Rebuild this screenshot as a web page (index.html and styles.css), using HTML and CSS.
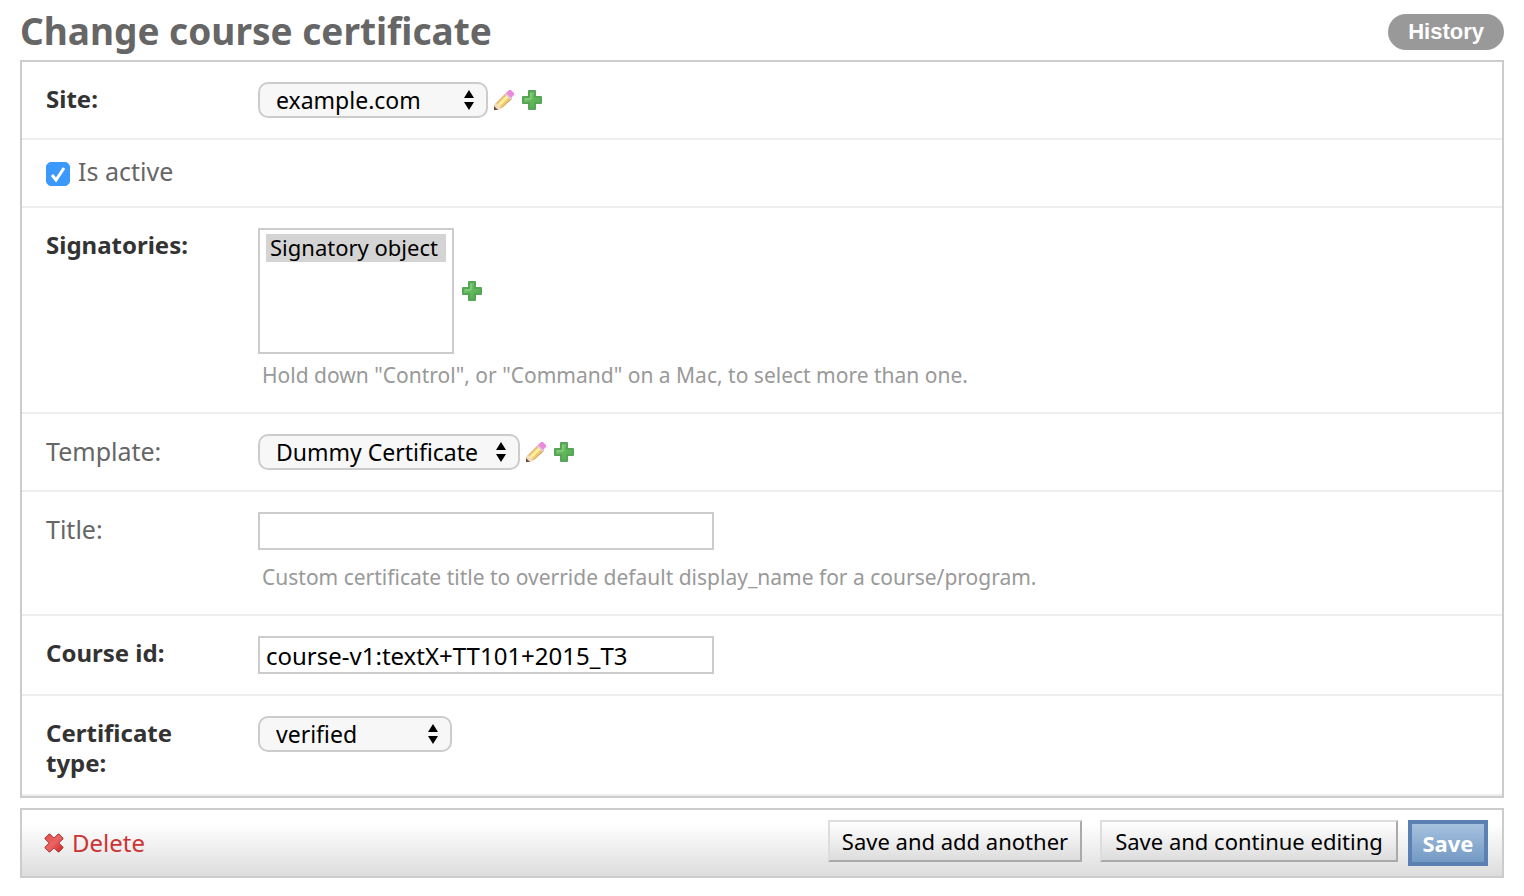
FILE: index.html
```html
<!DOCTYPE html>
<html lang="en">
<head>
<meta charset="utf-8">
<title>Change course certificate</title>
<link rel="stylesheet" href="styles.css">
</head>
<body>
<svg class="defs" aria-hidden="true">
  <defs>
    <linearGradient id="green" x1="0" y1="0" x2="1" y2="1"><stop offset="0" stop-color="#7ccb75"/><stop offset="1" stop-color="#4aa547"/></linearGradient>
    <linearGradient id="red" x1="0" y1="0" x2="1" y2="1"><stop offset="0" stop-color="#e54848"/><stop offset=".5" stop-color="#ea6464"/><stop offset="1" stop-color="#cc1f1f"/></linearGradient>
    <symbol id="plus" viewBox="0 0 20 20">
      <path d="M7 1h6v6h6v6h-6v6H7v-6H1V7h6z" fill="url(#green)" stroke="#56a556" stroke-width="2" stroke-linejoin="round"/>
      <path d="M9 3v6H3" fill="none" stroke="#8fd889" stroke-width="1"/>
    </symbol>
    <symbol id="pencil" viewBox="0 0 20 20">
      <path d="M0 15 12 3l5 5L6 19l-6 1z" fill="#f0ca68"/>
      <path d="M1 14 12 3l1 1L3 15z" fill="#e2c083"/>
      <path d="M6 19 17 8l1 1L8 18z" fill="#cf9a5a"/>
      <path d="M3 15 13 5l2 2L5 17z" fill="#fff09a"/>
      <path d="M0 20v-5l2-2 5 5-2 2z" fill="#f3dcc4"/>
      <path d="M0 20v-4l4 4z" fill="#6b4c34"/>
      <path d="m11 4 2-2 5 5-2 3z" fill="#e0cfe0"/>
      <path d="m12 3 3-3h2l3 3v2l-3 3z" fill="#ee8ade"/>
    </symbol>
    <symbol id="cross" viewBox="0 0 20 20">
      <path d="M5 1h1l4 4 4-4h1l4 4v1l-4 4 4 4v1l-4 4h-1l-4-4-4 4H5l-4-4v-1l4-4-4-4V5z" fill="url(#red)" stroke="#b34a4a" stroke-width="1" stroke-linejoin="round"/>
    </symbol>
    <symbol id="arrows" viewBox="0 0 10 20"><path d="M5 0l5 8H0zM5 20l5-8H0z"/></symbol>
  </defs>
</svg>
<main class="page">
  <header class="top">
    <h1 class="heading">Change course certificate</h1>
    <a class="history" href="#">History</a>
  </header>
  <form class="form">
    <div class="module">
      <div class="row">
        <label class="label required" for="site">Site:</label>
        <div class="field">
          <div class="line">
            <span class="picker site"><select id="site"><option>example.com</option></select><svg><use href="#arrows"/></svg></span>
            <a class="icon" href="#" aria-label="Edit site"><svg><use href="#pencil"/></svg></a>
            <a class="icon add" href="#" aria-label="Add site"><svg><use href="#plus"/></svg></a>
          </div>
        </div>
      </div>
      <div class="row check">
        <span class="tick">
          <input id="active" type="checkbox" checked>
          <svg viewBox="0 0 24 24"><path d="M6 13l4 5 8-12" fill="none" stroke="#fff" stroke-width="3"/></svg>
        </span>
        <label for="active">Is active</label>
      </div>
      <div class="row">
        <label class="label required" for="signatories">Signatories:</label>
        <div class="field">
          <div class="line">
            <select id="signatories" class="multi" multiple size="4"><option selected>Signatory object</option></select>
            <a class="icon add" href="#" aria-label="Add signatory"><svg><use href="#plus"/></svg></a>
          </div>
          <p class="help">Hold down "Control", or "Command" on a Mac, to select more than one.</p>
        </div>
      </div>
      <div class="row">
        <label class="label" for="template">Template:</label>
        <div class="field">
          <div class="line">
            <span class="picker template"><select id="template"><option>Dummy Certificate</option></select><svg><use href="#arrows"/></svg></span>
            <a class="icon" href="#" aria-label="Edit template"><svg><use href="#pencil"/></svg></a>
            <a class="icon add" href="#" aria-label="Add template"><svg><use href="#plus"/></svg></a>
          </div>
        </div>
      </div>
      <div class="row">
        <label class="label" for="title">Title:</label>
        <div class="field">
          <input id="title" class="text" type="text">
          <p class="help spaced">Custom certificate title to override default display_name for a course/program.</p>
        </div>
      </div>
      <div class="row">
        <label class="label required" for="course">Course id:</label>
        <div class="field"><input id="course" class="text" type="text" value="course-v1:textX+TT101+2015_T3"></div>
      </div>
      <div class="row">
        <label class="label required" for="type">Certificate type:</label>
        <div class="field">
          <div class="line">
            <span class="picker type"><select id="type"><option>verified</option></select><svg><use href="#arrows"/></svg></span>
          </div>
        </div>
      </div>
    </div>
    <div class="submit">
      <a class="delete" href="#"><svg><use href="#cross"/></svg>Delete</a>
      <button class="button another" type="button">Save and add another</button>
      <button class="button continue" type="button">Save and continue editing</button>
      <button class="button save" type="submit">Save</button>
    </div>
  </form>
</main>
</body>
</html>
```
FILE: styles.css
```css
* { box-sizing: border-box; }
body {
  margin: 0;
  background: #fff;
  color: #666;
  font: 24px/30px "Lucida Grande", "Noto Sans", "Open Sans", sans-serif;
}
button, input, select { margin: 0; font: inherit; color: #000; }
svg { display: block; }
.defs { position: absolute; width: 0; height: 0; }
.page { padding: 14px 20px 18px; }
.top { display: flex; justify-content: space-between; height: 46px; }
.heading { margin: 0; font-size: 37px; line-height: 34px; font-weight: bold; }
.history {
  height: 36px;
  padding: 0 20px;
  border-radius: 18px;
  background: #999;
  color: #fff;
  font: bold 22px/36px "Liberation Sans", Arial, sans-serif;
  text-decoration: none;
}
.module { border: 2px solid #ccc; }
.row { display: flex; padding: 20px 24px 16px; border-bottom: 2px solid #eee; }
.label { flex: none; width: 170px; margin-right: 42px; padding-top: 2px; font-size: 25px; }
.required { color: #333; font-size: 24px; font-weight: bold; }
.field { flex: 1; min-width: 0; padding-bottom: 4px; }
.line { display: flex; align-items: center; }
.picker { position: relative; }
.picker select {
  display: block;
  width: 100%;
  height: 36px;
  padding: 0 36px 0 16px;
  border: 2px solid #ccc;
  border-radius: 10px;
  background: #f7f7f7;
  appearance: none;
  font-size: 23px;
  line-height: 30px;
}
.picker svg { position: absolute; top: 8px; right: 14px; width: 10px; height: 20px; pointer-events: none; }
.site { width: 230px; }
.template { width: 262px; }
.type { width: 194px; }
.icon { margin-left: 6px; }
.icon.add { margin-left: 8px; }
.icon svg { width: 20px; height: 20px; }
.check { align-items: flex-start; gap: 8px; padding: 22px 24px 20px; }
.check label { margin-top: -6px; font-size: 25px; }
.tick { position: relative; width: 24px; height: 24px; }
.tick input {
  display: block;
  width: 24px;
  height: 24px;
  border: 1px solid #ccc;
  border-radius: 5px;
  background: #fff;
  appearance: none;
}
.tick input:checked { border-color: #3b99fc; background: #3b99fc; }
.tick svg { position: absolute; inset: 0; pointer-events: none; }
.multi {
  width: 196px;
  height: 126px;
  padding: 4px 6px;
  border: 2px solid #ccc;
  border-radius: 0;
  background: #fff;
  font-size: 22px;
  overflow: hidden;
}
.multi option { display: flex; align-items: center; height: 28px; min-height: 28px; padding: 0 4px 2px; color: #000; }
.multi option:checked { background: linear-gradient(#d4d4d4, #d4d4d4); color: #000; }
.help { margin: 6px 0 2px; padding-left: 4px; color: #999; font-size: 21px; }
.help.spaced { margin-top: 12px; }
.text {
  display: block;
  width: 456px;
  max-width: 100%;
  height: 38px;
  padding: 0 6px;
  border: 2px solid #ccc;
  background: #fff;
  font-size: 24px;
}
.submit {
  display: flex;
  align-items: flex-start;
  height: 70px;
  margin-top: 10px;
  padding: 10px 14px 10px 22px;
  border: 2px solid #ccc;
  background: linear-gradient(#fff 20%, #ddd);
}
.delete { display: flex; align-items: center; gap: 8px; height: 46px; margin-right: auto; color: #cc3434; text-decoration: none; }
.delete svg { width: 20px; height: 20px; }
.button {
  height: 42px;
  padding: 0 6px;
  border: 2px solid;
  border-color: #ddd #aaa #aaa #ddd;
  background: linear-gradient(#fff, #ddd);
  font-size: 22px;
  white-space: nowrap;
}
.another { min-width: 254px; margin-right: 18px; }
.continue { min-width: 298px; margin-right: 10px; }
.save { width: 80px; height: 46px; padding: 0; border: 4px solid #5b80b2; background: linear-gradient(#a6c1de, #7399c4); color: #fff; font-weight: bold; }
```
